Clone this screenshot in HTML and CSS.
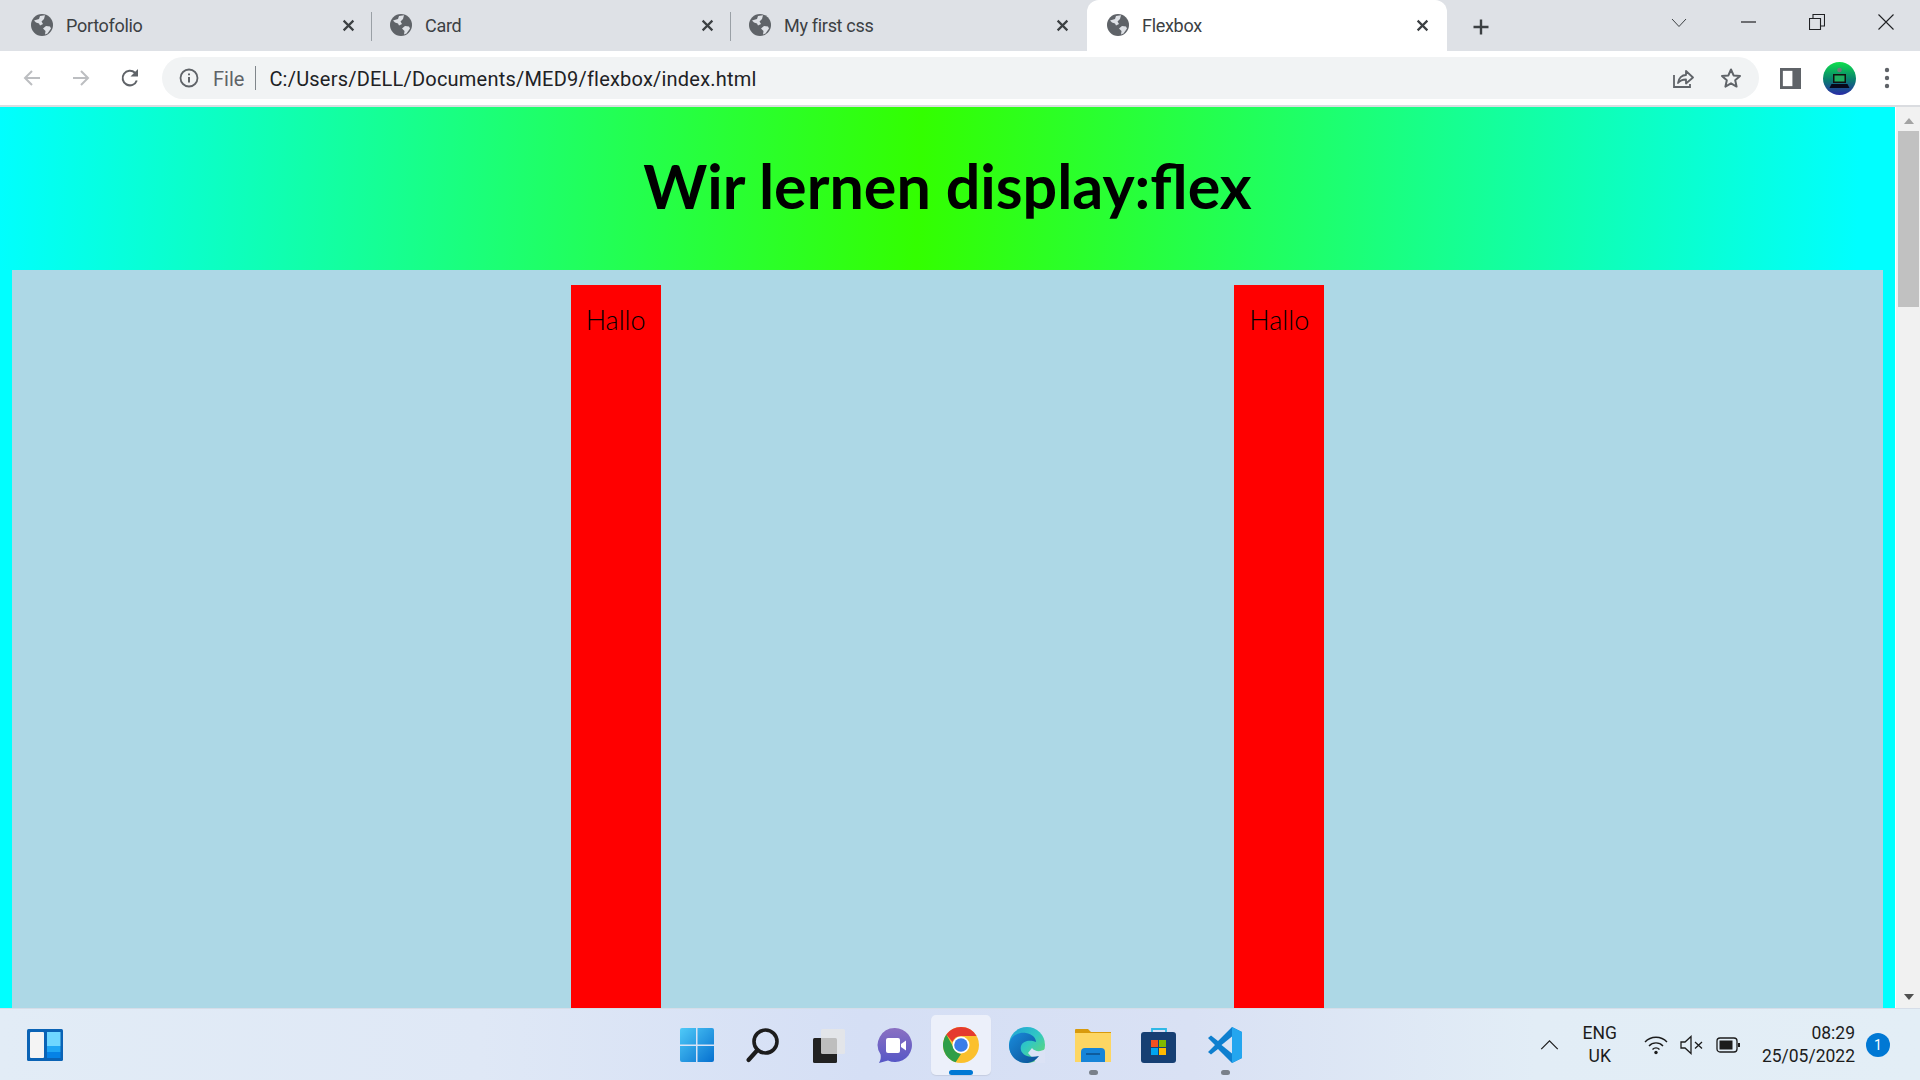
FILE: index.html
```html
<!DOCTYPE html>
<html lang="de">
<head>
<meta charset="utf-8">
<title>Flexbox</title>
<link rel="stylesheet" href="styles.css">
</head>
<body>
<svg class="defs" width="0" height="0" aria-hidden="true">
  <symbol id="globe" viewBox="0 0 22 22">
    <circle cx="11" cy="11" r="11" fill="#5f6368"/>
    <path d="M3 6.500 8 5l1-3 5-.8L13 5l-2.500 2.500L12 10l-3 1.500-1-2-3-1zM15 12l4 .5 1 2-3.500 5-2.500 1 .5-3.500-2.500-2.500z" fill="#dee1e6"/>
    <path d="M2 13l4 .5 3 3 .5 4-2-.5-4-3.500z" fill="#5f6368"/>
  </symbol>
  <symbol id="x" viewBox="0 0 12 12">
    <path d="M1.500 1.500l9 9M10.500 1.500l-9 9" stroke="#3c4043" stroke-width="2" fill="none"/>
  </symbol>
</svg>

<div class="tabbar">
  <div class="tab">
    <svg class="globe"><use href="#globe"/></svg><span class="tab-title">Portofolio</span><svg class="tab-x"><use href="#x"/></svg>
  </div>
  <div class="tab">
    <svg class="globe"><use href="#globe"/></svg><span class="tab-title">Card</span><svg class="tab-x"><use href="#x"/></svg>
  </div>
  <div class="tab tab-last">
    <svg class="globe"><use href="#globe"/></svg><span class="tab-title">My first css</span><svg class="tab-x"><use href="#x"/></svg>
  </div>
  <div class="tab tab-active">
    <svg class="globe"><use href="#globe"/></svg><span class="tab-title">Flexbox</span><svg class="tab-x"><use href="#x"/></svg>
  </div>
  <svg class="new-tab" viewBox="0 0 18 18"><path d="M9 1.500v15M1.500 9h15" stroke="#3c4043" stroke-width="2.400" fill="none"/></svg>
  <div class="win-controls">
    <svg class="win-ic" viewBox="0 0 16 16"><path d="M1 5l7 7.500L15 5" stroke="#3c4043" stroke-width="1" fill="none"/></svg>
    <svg class="win-ic" viewBox="0 0 16 16"><path d="M1 8h15" stroke="#202124" stroke-width="1.200" fill="none"/></svg>
    <svg class="win-ic" viewBox="0 0 16 16"><path d="M.5 4.500h11v11H.5zM4 4.500V.5h11.500V12h-4" stroke="#202124" stroke-width="1.100" fill="none"/></svg>
    <svg class="win-ic" viewBox="0 0 16 16"><path d="M.5.500l15 15M15.500.5l-15 15" stroke="#202124" stroke-width="1.100" fill="none"/></svg>
  </div>
</div>

<div class="toolbar">
  <svg class="tool-ic" viewBox="0 0 20 20"><path d="M18 10H3M10 3l-7 7 7 7" stroke="#bcbec1" stroke-width="2" fill="none"/></svg>
  <svg class="tool-ic" viewBox="0 0 20 20"><path d="M2 10h15M10 3l7 7-7 7" stroke="#bcbec1" stroke-width="2" fill="none"/></svg>
  <svg class="tool-ic" viewBox="0 0 20 20"><path d="M16.800 12.500A7.300 7.300 0 1 1 15 4.800" stroke="#5f6368" stroke-width="2" fill="none"/><path d="M18 1v7.500h-7.500z" fill="#5f6368"/></svg>
  <div class="omnibox">
    <svg class="info" viewBox="0 0 20 20"><circle cx="10" cy="10" r="8.500" stroke="#5f6368" stroke-width="1.800" fill="none"/><path d="M10 9v5.500M10 5.500v1.800" stroke="#5f6368" stroke-width="2" fill="none"/></svg>
    <span class="omni-file">File</span>
    <span class="omni-sep"></span>
    <span class="omni-url">C:/Users/DELL/Documents/MED9/flexbox/index.html</span>
    <svg class="share" viewBox="0 0 22 22"><path d="M2 8v12h16v-3" stroke="#5f6368" stroke-width="1.800" fill="none"/><path d="M6 16c.5-5 4-8 8-8V4l7 6.500-7 6v-4c-3.500 0-6 1-8 3.500z" stroke="#5f6368" stroke-width="1.800" fill="none" stroke-linejoin="round"/></svg>
    <svg class="star" viewBox="0 0 22 22"><path d="M11 2.500l2.600 5.900 6.400.6-4.800 4.300 1.400 6.300-5.600-3.300-5.600 3.300 1.400-6.300L2 9l6.400-.6z" stroke="#5f6368" stroke-width="2" fill="none" stroke-linejoin="round"/></svg>
  </div>
  <svg class="panel" viewBox="0 0 22 22"><path d="M0 0h22v22H0z" fill="#5f6368"/><path d="M3 3h10v16H3z" fill="#fff"/></svg>
  <svg class="avatar" viewBox="0 0 33 33">
    <defs><linearGradient id="av" x1="0" y1="0" x2="0" y2="1"><stop offset="0" stop-color="#0ee04c"/><stop offset=".55" stop-color="#0a7d70"/><stop offset="1" stop-color="#2a2aa8"/></linearGradient></defs>
    <circle cx="16.500" cy="16.500" r="16.500" fill="url(#av)"/>
    <circle cx="16.500" cy="8" r="2.300" fill="#777"/>
    <path d="M10 12h13v9H10z" fill="#111"/><path d="M11.500 13.500h10v6h-10z" fill="#1fae5f"/>
    <path d="M8.500 22h16l2 4h-20z" fill="#08081a"/>
  </svg>
  <svg class="menu" viewBox="0 0 6 22"><circle cx="3" cy="3" r="2.200" fill="#5f6368"/><circle cx="3" cy="11" r="2.200" fill="#5f6368"/><circle cx="3" cy="19" r="2.200" fill="#5f6368"/></svg>
</div>

<div class="viewport">
  <div class="page">
    <header class="page-head"><h1 class="page-title">Wir lernen display:flex</h1></header>
    <main class="flex-box">
      <div class="flex-item">Hallo</div>
      <div class="flex-item">Hallo</div>
    </main>
  </div>
  <div class="scrollbar">
    <svg class="sb-arrow" viewBox="0 0 12 8"><path d="M6 1l5 6H1z" fill="#a3a3a3"/></svg>
    <div class="sb-thumb"></div>
    <div class="sb-rest"></div>
    <svg class="sb-arrow" viewBox="0 0 12 8"><path d="M6 7L1 1h10z" fill="#505050"/></svg>
  </div>
</div>

<footer class="taskbar">
  <div class="tb-left">
    <svg class="widgets" viewBox="0 0 36 32">
      <rect width="36" height="32" rx="1.500" fill="#0a63b5"/>
      <rect x="3" y="3" width="14" height="26" rx="1" fill="#f4f4f4"/>
      <rect x="20" y="3" width="13.500" height="14" fill="#6fd7ff"/>
      <rect x="20" y="17" width="13.500" height="6" fill="#1fa6f4"/>
      <rect x="20" y="23" width="13.500" height="6" fill="#0582e6"/>
    </svg>
  </div>
  <div class="tb-center">
    <div class="tb-item">
      <svg class="tb-ic" viewBox="0 0 36 36">
        <defs><linearGradient id="w1" x1="0" y1="0" x2="1" y2="1"><stop offset="0" stop-color="#4fcaf8"/><stop offset="1" stop-color="#0670cf"/></linearGradient></defs>
        <path d="M1 3a2 2 0 0 1 2-2h14v16.500H1zM18.500 1H33a2 2 0 0 1 2 2v14.500H18.500zM1 19h16v16H3a2 2 0 0 1-2-2zM18.500 19H35v14a2 2 0 0 1-2 2H18.500z" fill="url(#w1)"/>
      </svg>
    </div>
    <div class="tb-item">
      <svg class="tb-ic" viewBox="0 0 36 36"><circle cx="20.500" cy="14.500" r="11.500" stroke="#1c1c1c" stroke-width="3.600" fill="none"/><path d="M12.500 23L3.500 33" stroke="#1c1c1c" stroke-width="4.200" stroke-linecap="round" fill="none"/></svg>
    </div>
    <div class="tb-item">
      <svg class="tb-ic" viewBox="0 0 36 36"><rect x="2" y="11" width="24" height="25" rx="1.500" fill="#222"/><rect x="10" y="2" width="24" height="25" rx="1.500" fill="#e6e6e6" fill-opacity=".8"/></svg>
    </div>
    <div class="tb-item">
      <svg class="tb-ic" viewBox="0 0 36 36">
        <defs><linearGradient id="ch" x1="0" y1="0" x2="0" y2="1"><stop offset="0" stop-color="#8a70c2"/><stop offset="1" stop-color="#5657c6"/></linearGradient></defs>
        <path d="M18 1a17 17 0 1 1-7 32.500L2 36c1.800-3 2-5.500 1.600-8.500A17 17 0 0 1 18 1z" fill="url(#ch)"/>
        <rect x="9" y="11" width="14" height="15" rx="2" fill="#fff"/><path d="M24 17l5-3.500v10L24 20z" fill="#fff"/>
      </svg>
    </div>
    <div class="tb-item tb-active">
      <svg class="tb-ic" viewBox="0 0 36 36">
        <circle cx="18" cy="18" r="18" fill="#fbc02d"/>
        <path d="M18 0a18 18 0 0 1 15.600 9H18a9 9 0 0 0-8.500 6L3.300 7.600A18 18 0 0 1 18 0z" fill="#e53a2f"/>
        <path d="M3.300 7.600l7.700 13.600a9 9 0 0 0 7 5.800L12.600 35.200A18 18 0 0 1 3.300 7.600z" fill="#2f9e48"/>
        <circle cx="18" cy="18" r="8.500" fill="#fff"/><circle cx="18" cy="18" r="6.800" fill="#3b7de9"/>
      </svg>
      <span class="tb-bar"></span>
    </div>
    <div class="tb-item">
      <svg class="tb-ic" viewBox="0 0 36 36">
        <defs>
          <linearGradient id="e1" x1="0" y1="0" x2="1" y2="1"><stop offset="0" stop-color="#1f9fd8"/><stop offset=".5" stop-color="#30c8c4"/><stop offset="1" stop-color="#6fdc62"/></linearGradient>
          <linearGradient id="e2" x1="0" y1="0" x2="1" y2="1"><stop offset="0" stop-color="#1a8cdc"/><stop offset="1" stop-color="#0a4f94"/></linearGradient>
        </defs>
        <circle cx="18" cy="18" r="18" fill="url(#e1)"/>
        <path d="M36 22C32 25 26 25 23 21L19 26 28 36H36z" fill="#dbe2f5"/>
        <path d="M0 18C1 9 9 5 17 6c6 .8 10 5 10 9-5-2-13-2-15 4-2 7 6 13 18 10-4 5-8 7-13 7C7 36 0 28 0 18z" fill="url(#e2)"/>
      </svg>
    </div>
    <div class="tb-item">
      <svg class="tb-ic" viewBox="0 0 36 36">
        <path d="M0 3a1 1 0 0 1 1-1h12l3 3h20v6H0z" fill="#d89a0c"/>
        <path d="M0 6h36v29H0z" fill="#fdd663"/>
        <path d="M6 35V25a4 4 0 0 1 4-4h16a4 4 0 0 1 4 4v10z" fill="#1684d8"/>
        <path d="M11 27h14" stroke="#0d4f8a" stroke-width="1.500"/>
      </svg>
      <span class="tb-dot"></span>
    </div>
    <div class="tb-item">
      <svg class="tb-ic" viewBox="0 0 36 36">
        <path d="M11 7V2h14v5" stroke="#2fb8e6" stroke-width="1.800" fill="none"/>
        <rect y="5" width="35" height="31" rx="3" fill="#163f73"/>
        <rect x="10" y="13" width="7" height="7" fill="#f25022"/><rect x="18" y="13" width="7" height="7" fill="#7fba00"/>
        <rect x="10" y="21" width="7" height="7" fill="#00a4ef"/><rect x="18" y="21" width="7" height="7" fill="#ffb900"/>
      </svg>
    </div>
    <div class="tb-item">
      <svg class="tb-ic" viewBox="0 0 36 36">
        <path d="M25 0l10 5v26l-10 5-14-14-7 5.500L1 25l7-7-7-7 3-2.500L11 14z" fill="#0e7fcf"/>
        <path d="M25 9.500L14.500 18 25 26.500z" fill="#dbe3f4"/>
        <path d="M25 0l10 5v26l-10 5z" fill="#24a6ef"/>
      </svg>
      <span class="tb-dot"></span>
    </div>
  </div>
  <div class="tb-right">
    <svg class="tray-chev" viewBox="0 0 20 12"><path d="M1 11l9-9 9 9" stroke="#1c1c1c" stroke-width="1.300" fill="none"/></svg>
    <div class="tray-lang"><span>ENG</span><span>UK</span></div>
    <div class="tray-icons">
      <svg class="tray-ic" viewBox="0 0 24 20"><path d="M1 7a15 15 0 0 1 22 0M5 11a9.500 9.500 0 0 1 14 0M8.500 14.500a5 5 0 0 1 7 0" stroke="#1c1c1c" stroke-width="1.400" fill="none"/><circle cx="12" cy="17.500" r="1.700" fill="#1c1c1c"/></svg>
      <svg class="tray-ic" viewBox="0 0 24 20"><path d="M1 7h4l6-5.500v17L5 13H1z" stroke="#1c1c1c" stroke-width="1.300" fill="none"/><path d="M15 7l7 6.500M22 7l-7 6.500" stroke="#1c1c1c" stroke-width="1.300" fill="none"/></svg>
      <svg class="tray-ic" viewBox="0 0 24 20"><rect x="1" y="3" width="20" height="14" rx="3" stroke="#1c1c1c" stroke-width="1.300" fill="none"/><rect x="3.500" y="5.500" width="13" height="9" fill="#1c1c1c"/><path d="M22 8h2v4h-2z" fill="#1c1c1c"/></svg>
    </div>
    <div class="tray-clock"><span>08:29</span><span>25/05/2022</span></div>
    <span class="tray-badge">1</span>
  </div>
</footer>
</body>
</html>
```

FILE: styles.css
```css
* { box-sizing: border-box; }
html, body { margin: 0; height: 100%; }
body {
  width: 1920px;
  height: 1080px;
  overflow: hidden;
  display: flex;
  flex-direction: column;
  font-family: Roboto, "Liberation Sans", sans-serif;
  color: #202124;
  background: #fff;
}
.defs { position: absolute; }

/* tab strip */
.tabbar {
  height: 51px;
  flex: none;
  display: flex;
  align-items: flex-end;
  padding-left: 14px;
  background: #dee1e6;
}
.tab {
  width: 359px;
  height: 51px;
  flex: none;
  display: flex;
  align-items: center;
  padding: 0 18px 1px 17px;
  font-size: 18px;
  color: #3c4043;
  position: relative;
}
.tab::after {
  content: "";
  position: absolute;
  right: 1px;
  top: 12px;
  height: 29px;
  width: 1px;
  background: #9aa0a6;
}
.tab-last { width: 355px; }
.tab-last::after { display: none; }
.tab-active {
  width: 360px;
  padding-left: 20px;
  background: #fff;
  border-radius: 12px 12px 0 0;
}
.tab-active::after { display: none; }
.globe { width: 22px; height: 22px; flex: none; }
.tab-title { flex: 1; margin-left: 13px; white-space: nowrap; letter-spacing: -.3px; }
.tab-x { width: 13px; height: 13px; flex: none; }
.new-tab { width: 18px; height: 18px; margin: 0 0 15px 25px; flex: none; }
.win-controls {
  margin-left: auto;
  align-self: flex-start;
  display: flex;
  gap: 53px;
  padding: 14px 26px 0 0;
}
.win-ic { width: 16px; height: 16px; display: block; }

/* toolbar */
.toolbar {
  height: 54px;
  flex: none;
  display: flex;
  align-items: center;
  padding: 0 0 0 22px;
  background: #fff;
}
.tool-ic { width: 20px; height: 20px; margin-right: 29px; flex: none; }
.tool-ic:nth-child(3) { margin-right: 22px; }
.omnibox {
  width: 1597px;
  height: 42px;
  flex: none;
  display: flex;
  align-items: center;
  padding: 0 16px;
  border-radius: 21px;
  background: #f1f3f4;
  font-size: 20px;
}
.info { width: 20px; height: 20px; margin-left: 1px; flex: none; }
.omni-file { margin-left: 14px; padding-top: 2px; color: #5f6368; }
.omni-sep { width: 1px; height: 24px; margin: 0 13px 0 11px; background: #80868b; }
.omni-url { flex: 1; padding-top: 2px; letter-spacing: .21px; white-space: nowrap; }
.share { width: 22px; height: 22px; margin-right: 26px; flex: none; }
.star { width: 22px; height: 22px; margin-right: 1px; flex: none; }
.panel { width: 21px; height: 21px; margin-left: 21px; flex: none; }
.avatar { width: 33px; height: 33px; margin-left: 22px; flex: none; }
.menu { width: 6px; height: 22px; margin-left: 28px; flex: none; }

/* page */
.viewport {
  flex: 1;
  min-height: 0;
  display: flex;
  border-top: 2px solid #dadce0;
}
.page {
  flex: 1;
  min-width: 0;
  overflow: hidden;
  display: flex;
  flex-direction: column;
  background: #0ff;
}
.page-head {
  height: 163px;
  flex: none;
  display: flex;
  justify-content: center;
  align-items: center;
  background: linear-gradient(92deg, #0ff 0%, #3f0 48.5%, #0ff 98%);
}
.page-title {
  margin: 0 0 6px;
  font-family: Lato, "Liberation Sans", sans-serif;
  font-size: 61px;
  font-weight: 700;
  color: #000;
  white-space: nowrap;
}
.flex-box {
  flex: 1;
  margin: 0 12px;
  min-height: 0;
  display: flex;
  justify-content: space-evenly;
  background: #add8e6;
}
.flex-item {
  width: 90px;
  margin: 15px;
  margin-bottom: -400px;
  padding: 15px;
  background: #f00;
  color: #000;
  font-family: Lato, "Liberation Sans", sans-serif;
  font-weight: 300;
  font-size: 27px;
  line-height: 40px;
}

/* scrollbar */
.scrollbar {
  width: 25px;
  flex: none;
  display: flex;
  flex-direction: column;
  align-items: center;
  padding-left: 1px;
  background: #f1f1f1;
  border-left: 1px solid #fff;
}
.sb-arrow { width: 12px; height: 8px; margin: 10px 0 6px; flex: none; }
.sb-arrow:last-child { margin: 6px 0 7px; }
.sb-thumb { width: 21px; height: 176px; flex: none; background: #c1c1c1; }
.sb-rest { flex: 1; }

/* taskbar */
.taskbar {
  height: 72px;
  flex: none;
  display: grid;
  grid-template-columns: 1fr auto 1fr;
  align-items: center;
  border-top: 1px solid #d6dde8;
  background: linear-gradient(90deg, #e2ecf6 0%, #dfe8f6 25%, #d5dff5 45%, #d9e1f4 62%, #e2edf6 80%, #e3eef6 100%);
}
.tb-left { display: flex; padding-left: 27px; }
.widgets { width: 36px; height: 32px; }
.tb-center { display: flex; gap: 6px; margin-left: 1px; }
.tb-item {
  width: 60px;
  height: 60px;
  display: flex;
  justify-content: center;
  align-items: center;
  border-radius: 5px;
  position: relative;
}
.tb-active { background: #ecf0fa; box-shadow: 0 1px 1px #c5cde0; }
.tb-ic { width: 36px; height: 36px; }
.tb-bar {
  position: absolute;
  left: 18px;
  bottom: 0;
  width: 24px;
  height: 5px;
  border-radius: 3px;
  background: #0078d4;
}
.tb-dot {
  position: absolute;
  left: 26px;
  bottom: 0;
  width: 9px;
  height: 5px;
  border-radius: 3px;
  background: #79808a;
}
.tb-right {
  display: flex;
  justify-content: flex-end;
  align-items: center;
  padding-right: 30px;
  font-size: 17.500px;
  color: #1c1c1c;
}
.tray-chev { width: 19px; height: 11px; flex: none; }
.tray-lang {
  display: flex;
  flex-direction: column;
  align-items: center;
  margin-left: 24px;
  margin-right: 1px;
  line-height: 23px;
}
.tray-icons { display: flex; gap: 12px; margin-left: 26px; }
.tray-ic { width: 24px; height: 20px; display: block; }
.tray-clock {
  display: flex;
  flex-direction: column;
  align-items: flex-end;
  margin-left: 22px;
  line-height: 23px;
}
.tray-badge {
  width: 24px;
  height: 24px;
  margin-left: 11px;
  display: flex;
  justify-content: center;
  align-items: center;
  border-radius: 50%;
  background: #0078d4;
  color: #fff;
  font-size: 14px;
}
```
